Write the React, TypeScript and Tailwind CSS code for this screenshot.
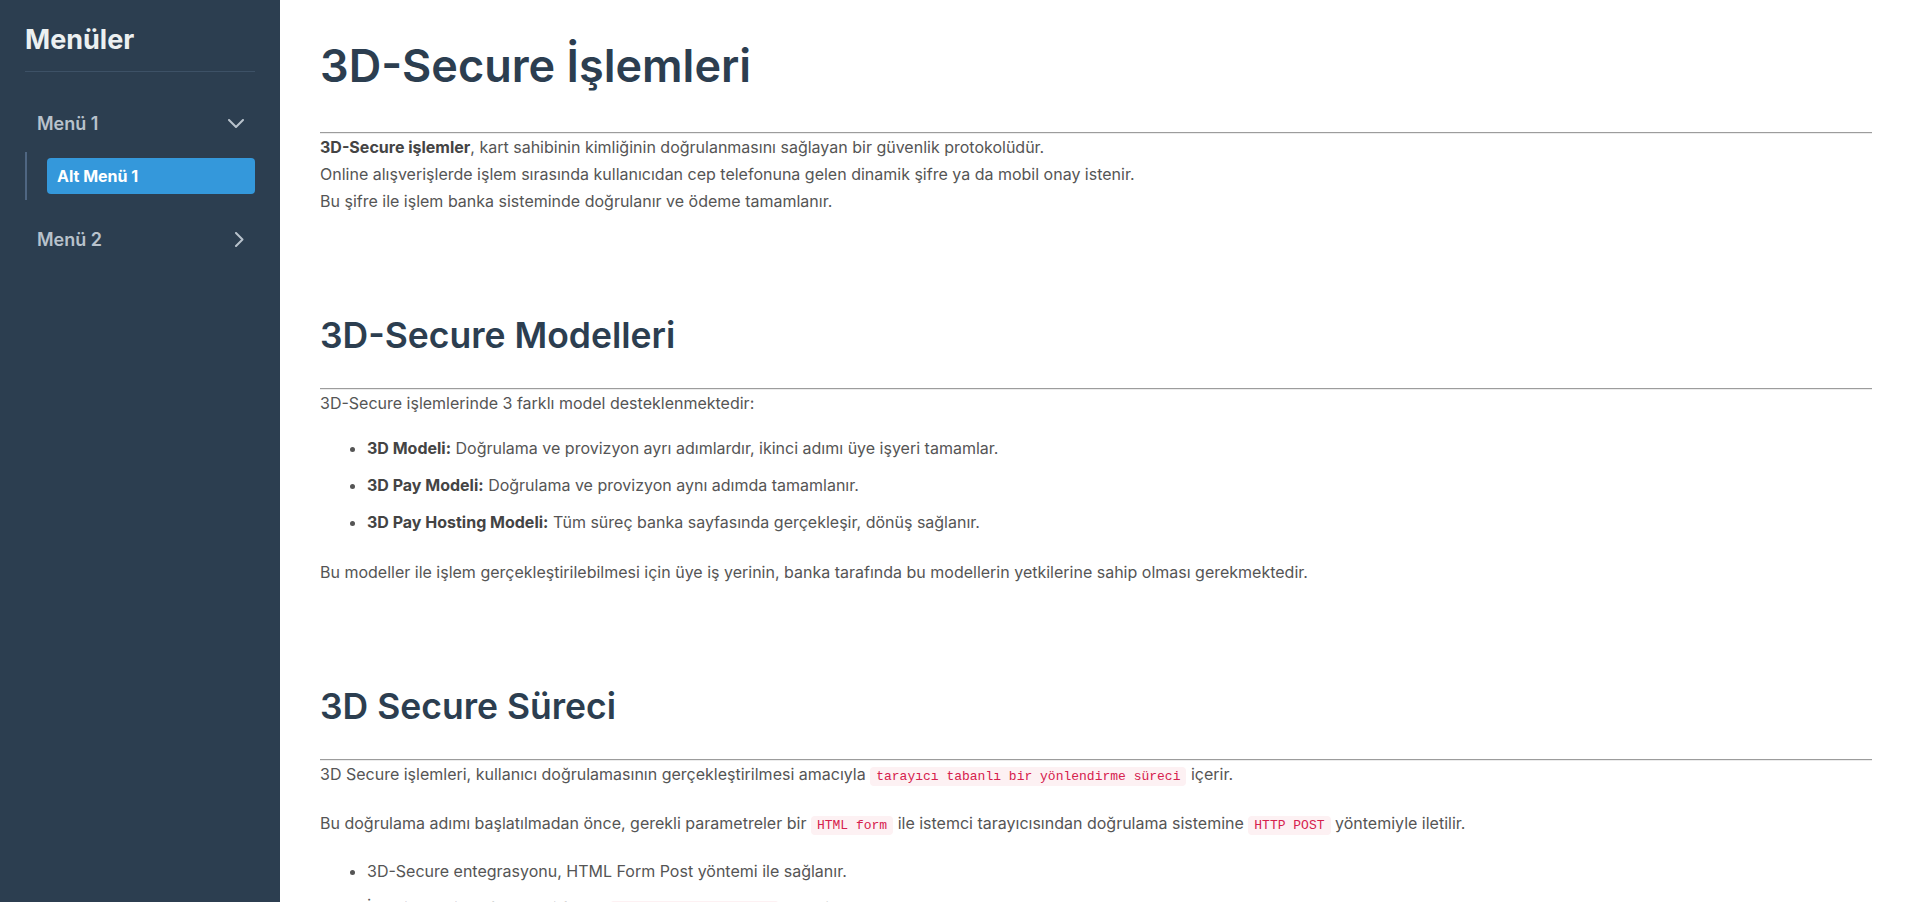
import { useState } from 'react';

type SubItem = { id: number; label: string };
type MenuItem = { id: number; label: string; children: SubItem[] };

const menus: MenuItem[] = [
    { id: 1, label: 'Menü 1', children: [{ id: 11, label: 'Alt Menü 1' }] },
    { id: 2, label: 'Menü 2', children: [{ id: 21, label: 'Alt Menü 2' }] }
];

function Chevron({ open }: { open: boolean }) {
    return open ? (
        <svg width="16" height="9" viewBox="0 0 16 9" fill="none" className="mr-[-1px]">
            <path d="M1 1l7 7 7-7" stroke="currentColor" strokeWidth="2" strokeLinecap="round" strokeLinejoin="round" />
        </svg>
    ) : (
        <svg width="10" height="15" viewBox="0 0 10 15" fill="none" className="mr-[-1px]">
            <path d="M2 1l6.5 6.5L2 14" stroke="currentColor" strokeWidth="2" strokeLinecap="round" strokeLinejoin="round" />
        </svg>
    );
}

function Code({ children }: { children: React.ReactNode }) {
    return (
        <code className="bg-[#fdf1f3] text-[#d6204d] rounded-[4px] px-[6px] py-[2px] text-[13px] font-['Liberation_Mono',monospace]">
            {children}
        </code>
    );
}

function Sidebar() {
    const [open, setOpen] = useState<number | null>(1);
    const [active, setActive] = useState(11);

    return (
        <aside className="w-[280px] shrink-0 h-full bg-[#2c3e50] px-[25px] pt-[24px]">
            <h2 className="text-[27px] leading-[31px] font-bold text-[#ecf0f1] pb-[16px] border-b border-[#3d5166]">
                Menüler
            </h2>
            <nav className="mt-[28px] flex flex-col">
                {menus.map(menu => (
                    <div key={menu.id} className="flex flex-col mb-[16px]">
                        <button
                            onClick={() => setOpen(open === menu.id ? null : menu.id)}
                            className="flex items-center justify-between h-[46px] px-[12px] text-[18px] font-semibold text-[#b8c2cc] cursor-pointer"
                        >
                            {menu.label}
                            <Chevron open={open === menu.id} />
                        </button>
                        {open === menu.id && (
                            <div className="mt-[6px] border-l-2 border-[#4f6682] pl-[20px] py-[6px]">
                                {menu.children.map(sub => (
                                    <button
                                        key={sub.id}
                                        onClick={() => setActive(sub.id)}
                                        className={
                                            sub.id === active
                                                ? 'w-full h-[36px] flex items-center px-[10px] rounded-[4px] bg-[#3498db] text-white text-[16px] font-bold'
                                                : 'w-full h-[36px] flex items-center px-[10px] rounded-[4px] text-[#b8c2cc] text-[16px] font-bold'
                                        }
                                    >
                                        {sub.label}
                                    </button>
                                ))}
                            </div>
                        )}
                    </div>
                ))}
            </nav>
        </aside>
    );
}

function Rule() {
    return <hr className="border-0 border-t border-b border-t-[#9c9c9c] border-b-[#ececec]" />;
}

export default function App() {
    return (
        <div className="flex h-screen overflow-hidden bg-white font-['Inter','Noto_Sans',sans-serif]">
            <Sidebar />
            <main className="flex-1 min-w-0 px-[40px] pt-[39px] text-[16px] leading-[27.2px] text-[#555]">
                <div className="flex flex-col gap-[98px]">
                    <section>
                        <h1 className="text-[45px] leading-[54px] font-semibold text-[#2c3e50] mb-[39px]">
                            3D-Secure İşlemleri
                        </h1>
                        <Rule />
                        <p>
                            <strong className="font-bold text-[#444]">3D-Secure işlemler</strong>, kart sahibinin
                            kimliğinin doğrulanmasını sağlayan bir güvenlik protokolüdür.
                            <br />
                            Online alışverişlerde işlem sırasında kullanıcıdan cep telefonuna gelen dinamik şifre ya da
                            mobil onay istenir.
                            <br />
                            Bu şifre ile işlem banka sisteminde doğrulanır ve ödeme tamamlanır.
                        </p>
                    </section>

                    <section>
                        <h2 className="text-[35.5px] leading-[43px] font-semibold text-[#2c3e50] mb-[31px]">
                            3D-Secure Modelleri
                        </h2>
                        <Rule />
                        <p>3D-Secure işlemlerinde 3 farklı model desteklenmektedir:</p>
                        <ul className="list-disc pl-[47px] mt-[18px] mb-[23px] flex flex-col gap-[10px]">
                            <li>
                                <strong className="font-bold text-[#444]">3D Modeli:</strong> Doğrulama ve provizyon
                                ayrı adımlardır, ikinci adımı üye işyeri tamamlar.
                            </li>
                            <li>
                                <strong className="font-bold text-[#444]">3D Pay Modeli:</strong> Doğrulama ve
                                provizyon aynı adımda tamamlanır.
                            </li>
                            <li>
                                <strong className="font-bold text-[#444]">3D Pay Hosting Modeli:</strong> Tüm süreç
                                banka sayfasında gerçekleşir, dönüş sağlanır.
                            </li>
                        </ul>
                        <p>
                            Bu modeller ile işlem gerçekleştirilebilmesi için üye iş yerinin, banka tarafında bu
                            modellerin yetkilerine sahip olması gerekmektedir.
                        </p>
                    </section>

                    <section>
                        <h2 className="text-[35.5px] leading-[43px] font-semibold text-[#2c3e50] mb-[31px]">
                            3D Secure Süreci
                        </h2>
                        <Rule />
                        <p>
                            3D Secure işlemleri, kullanıcı doğrulamasının gerçekleştirilmesi amacıyla{' '}
                            <Code>tarayıcı tabanlı bir yönlendirme süreci</Code> içerir.
                        </p>
                        <p className="mt-[20px]">
                            Bu doğrulama adımı başlatılmadan önce, gerekli parametreler bir <Code>HTML form</Code> ile
                            istemci tarayıcısından doğrulama sistemine <Code>HTTP POST</Code> yöntemiyle iletilir.
                        </p>
                        <ul className="list-disc pl-[47px] mt-[19px] flex flex-col gap-[10px]">
                            <li>3D-Secure entegrasyonu, HTML Form Post yöntemi ile sağlanır.</li>
                            <li>
                                İşyeri, kendi sayfasındaki formu <Code>TDS Merchant Gateway</Code> adresine göndererek
                                entegre olur.
                            </li>
                        </ul>
                    </section>
                </div>
            </main>
        </div>
    );
}
